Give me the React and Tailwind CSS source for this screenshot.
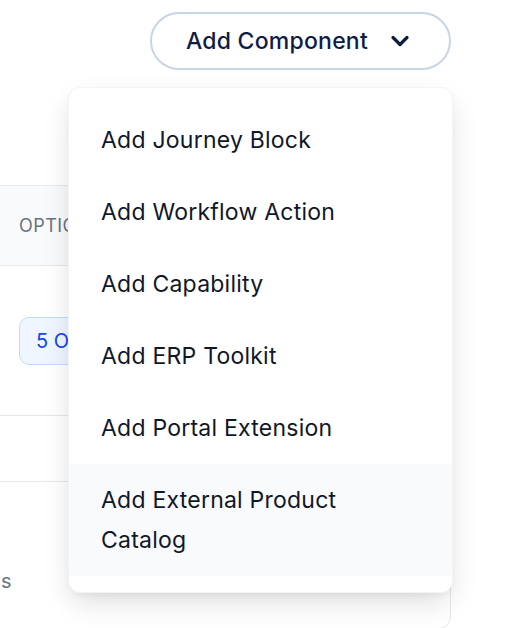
import { ChevronDown } from "lucide-react";

const menuItems = [
  "Add Journey Block",
  "Add Workflow Action",
  "Add Capability",
  "Add ERP Toolkit",
  "Add Portal Extension",
  "Add External Product Catalog",
];

export default function App() {
  return (
    <div
      className="relative h-[628px] w-[528px] overflow-hidden bg-white"
      style={{ fontFamily: "Inter, 'Noto Sans', sans-serif" }}
    >
      {/* Toolbar */}
      <div className="flex justify-end pt-3 pr-[77px]">
        <button className="flex h-[58px] items-center gap-[18px] rounded-full border-2 border-slate-300 bg-white pl-[34px] pr-[35px] text-[23px] font-medium tracking-[0.01em] text-[#0f1d45]">
          <span>Add Component</span>
          <ChevronDown className="h-[28px] w-[28px]" strokeWidth={2.75} />
        </button>
      </div>

      {/* Options table behind the menu */}
      <div className="-ml-3 mt-[115px] h-[444px] w-[463px] rounded-xl border border-gray-200">
        <div className="flex h-[80px] items-center border-b border-gray-200 bg-gray-50 pl-[30px] text-[18px] uppercase tracking-wide text-gray-500">
          Options
        </div>
        <div className="flex h-[150px] items-center border-b border-gray-200 pl-[30px]">
          <span className="rounded-[10px] border border-blue-200 bg-blue-50 px-4 py-[8px] text-[20px] text-blue-700">
            5 Options
          </span>
        </div>
        <div className="h-[66px] border-b border-gray-200" />
        <div className="pl-[12px] pt-[84px] text-[20px] text-gray-500">s</div>
      </div>

      {/* Dropdown menu */}
      <div className="absolute left-[68px] top-[87px] w-[385px] rounded-xl border border-gray-100 bg-white py-4 shadow-[0_12px_30px_-4px_rgba(0,0,0,0.14),0_4px_10px_-4px_rgba(0,0,0,0.08)]">
        {menuItems.map((item, i) => (
          <div
            key={item}
            className={`px-8 py-4 text-[23px] leading-[40px] tracking-[0.01em] text-gray-900 ${
              i === menuItems.length - 1 ? "bg-gray-50 pr-24" : ""
            }`}
          >
            {item}
          </div>
        ))}
      </div>
    </div>
  );
}
